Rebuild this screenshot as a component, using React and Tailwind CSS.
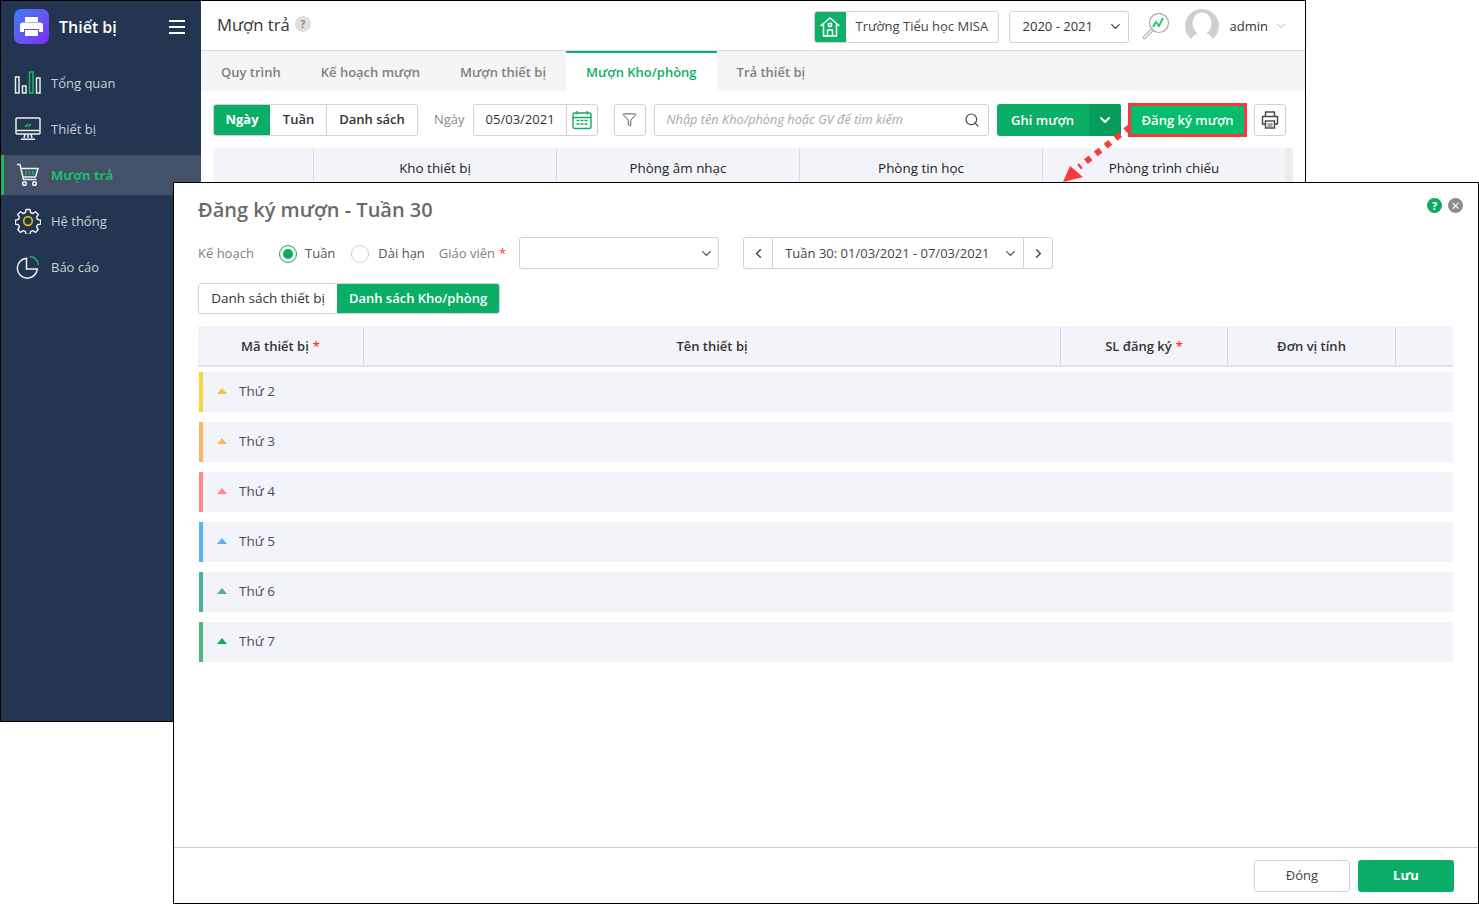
import { ChevronDown, ChevronLeft, ChevronRight, Search, Filter } from "lucide-react";

const menu = [
  { label: "Tổng quan", icon: <ChartIcon /> },
  { label: "Thiết bị", icon: <MonitorIcon /> },
  { label: "Mượn trả", icon: <CartIcon />, active: true },
  { label: "Hệ thống", icon: <GearIcon /> },
  { label: "Báo cáo", icon: <PieIcon /> },
];

const tabs = ["Quy trình", "Kế hoạch mượn", "Mượn thiết bị", "Mượn Kho/phòng", "Trả thiết bị"];

const days = [
  { label: "Thứ 2", bar: "bg-[#f6d440]", arrow: "border-b-[#fbbc3c]" },
  { label: "Thứ 3", bar: "bg-[#fdb665]", arrow: "border-b-[#fdb665]" },
  { label: "Thứ 4", bar: "bg-[#ff8a85]", arrow: "border-b-[#ff8a85]" },
  { label: "Thứ 5", bar: "bg-[#55b4f8]", arrow: "border-b-[#55b4f8]" },
  { label: "Thứ 6", bar: "bg-[#45b39d]", arrow: "border-b-[#45b39d]" },
  { label: "Thứ 7", bar: "bg-[#4cbb7a]", arrow: "border-b-[#0fa85c]" },
];

function ChartIcon() {
  return (
    <svg width="28" height="24" viewBox="0 0 28 24" fill="none" strokeWidth="1.5">
      <rect x="1.5" y="6" width="3.5" height="16" stroke="#e8ebef" />
      <rect x="8.5" y="15" width="3.5" height="7" stroke="#e8ebef" />
      <rect x="15.5" y="1" width="3.5" height="21" stroke="#19b868" />
      <rect x="22.5" y="7" width="3.5" height="15" stroke="#e8ebef" />
    </svg>
  );
}

function MonitorIcon() {
  return (
    <svg width="26" height="24" viewBox="0 0 26 24" fill="none" stroke="#eef0f3" strokeWidth="1.5">
      <rect x="1" y="1" width="24" height="16" rx="1" />
      <path d="M1 13.5h24M13 17v4M9 21l1-4M17 21l-1-4M6 22.3h14" />
      <path d="M10 10l3-3M13 10l3-3" stroke="#19b868" />
    </svg>
  );
}

function CartIcon() {
  return (
    <svg width="24" height="24" viewBox="0 0 24 24" fill="none" stroke="#eef0f3" strokeWidth="1.5">
      <path d="M1 1.5h3l3.5 15h13M5 5.500h17l-2.500 8.500H7" />
      <path d="M10 8v4M13.500 8v4M17 8v4" stroke="#19b868" />
      <circle cx="8.500" cy="20.500" r="1.800" />
      <circle cx="18.500" cy="20.500" r="1.800" />
    </svg>
  );
}

function GearIcon() {
  return (
    <svg width="26" height="26" viewBox="0 0 26 26" fill="none" stroke="#eef0f3" strokeWidth="1.4">
      <path d="M11 1.500h4l.6 3 2.300 1 2.600-1.700 2.800 2.800-1.700 2.600 1 2.300 3 .6v4l-3 .6-1 2.300 1.700 2.600-2.800 2.800-2.600-1.700-2.300 1-.6 2.700h-4l-.6-2.700-2.300-1-2.600 1.700-2.800-2.800 1.700-2.600-1-2.300-3-.6v-4l3-.6 1-2.300-1.700-2.600 2.800-2.800 2.600 1.700 2.300-1z" strokeLinejoin="round" />
      <circle cx="13" cy="13" r="4.300" stroke="#e5b318" strokeWidth="1.700" />
    </svg>
  );
}

function PieIcon() {
  return (
    <svg width="24" height="24" viewBox="0 0 24 24" fill="none" stroke="#eef0f3" strokeWidth="1.5">
      <path d="M10.500 3.200a10 10 0 1 0 10.800 10.800H10.500z" />
      <path d="M14 1.500a9 9 0 0 1 8.500 8.500" stroke="#19b868" />
    </svg>
  );
}

function HouseIcon() {
  return (
    <svg width="22" height="22" viewBox="0 0 22 22" fill="none" stroke="#fff" strokeWidth="1.5" strokeLinejoin="round">
      <path d="M1.500 10L11 2l9.500 8M4.500 8v12h13V8" />
      <path d="M8.500 20v-6h5v6" />
      <rect x="9.500" y="7.500" width="3" height="3" />
    </svg>
  );
}

function LensIcon() {
  return (
    <svg width="28" height="28" viewBox="0 0 28 28" fill="none">
      <circle cx="17" cy="10" r="9.500" stroke="#a9a9a9" strokeWidth="1.200" fill="#fff" />
      <path d="M10 17L2.500 24.500" stroke="#a9a9a9" strokeWidth="3.400" strokeLinecap="round" />
      <path d="M10 17L2.500 24.500" stroke="#fff" strokeWidth="1.400" strokeLinecap="round" />
      <path d="M11 14l3-5 3 4 4-8" stroke="#1fc46f" strokeWidth="1.800" />
    </svg>
  );
}

function AvatarIcon() {
  return (
    <svg width="34" height="34" viewBox="0 0 34 34">
      <circle cx="17" cy="17" r="17" fill="#cfcfcf" />
      <ellipse cx="17" cy="14.500" rx="9.500" ry="11" fill="#fff" />
      <path d="M5 34c1-7 6-10 12-10s11 3 12 10z" fill="#fff" />
    </svg>
  );
}

function CalendarIcon() {
  return (
    <svg width="20" height="20" viewBox="0 0 20 20" fill="none" stroke="#10ab62" strokeWidth="1.400">
      <rect x="1" y="3" width="18" height="15.500" rx="2" />
      <path d="M1 7.500h18M5 1v3.500M15 1v3.500" />
      <path d="M4.500 10.500h3M8.500 10.500h3M12.500 10.500h3M4.500 14h3M8.500 14h3M12.500 14h3" strokeWidth="1.600" />
    </svg>
  );
}

function PrintIcon() {
  return (
    <svg width="18" height="18" viewBox="0 0 18 18" fill="none" stroke="#444" strokeWidth="1.400">
      <path d="M4.500 5V1h9v4M4.500 13H1.500V5.500h15V13h-3" strokeLinejoin="round" />
      <rect x="4.500" y="10" width="9" height="7" />
      <path d="M6.500 13h5M6.500 15h5" strokeWidth="1" />
    </svg>
  );
}

function Sidebar() {
  return (
    <aside className="w-[200px] shrink-0 bg-[#233550]">
      <div className="h-[51px] flex items-center pl-[13px] pr-4">
        <div className="w-[35px] h-[35px] rounded-[7px] bg-gradient-to-br from-[#2f7bf5] to-[#7a26ec] flex items-center justify-center">
          <svg width="23" height="20" viewBox="0 0 23 20" fill="#fff">
            <path d="M5 0h13v5H5z" />
            <path d="M3 5.500h17a3 3 0 0 1 3 3V15h-4v-3H4v3H0V8.500a3 3 0 0 1 3-3z" />
            <path d="M5 13h13v6H5z" />
          </svg>
        </div>
        <span className="ml-[10px] text-base font-semibold text-white">Thiết bị</span>
        <div className="ml-auto w-4 flex flex-col gap-[4px]">
          <div className="h-0.5 bg-white" />
          <div className="h-0.5 bg-white" />
          <div className="h-0.5 bg-white" />
        </div>
      </div>
      <nav className="flex flex-col gap-[6px] pt-[11px]">
        {menu.map((item) => (
          <div
            key={item.label}
            className={
              item.active
                ? "h-10 flex items-center border-l-[3px] border-[#19b868] bg-[#435269] text-[#1fba6c] font-bold"
                : "h-10 flex items-center border-l-[3px] border-transparent text-[#c8cfd9]"
            }
          >
            <div className="w-[47px] flex justify-center pl-[1px]">{item.icon}</div>
            <span className="text-[13px] pt-[2px]">{item.label}</span>
          </div>
        ))}
      </nav>
    </aside>
  );
}

function BackWindow() {
  return (
    <div className="w-[1306px] h-[722px] border border-black flex overflow-hidden bg-white">
      <Sidebar />
      <main className="flex-1 min-w-0">
        <header className="h-[50px] flex items-center pl-4 pr-[17px] border-b border-[#dcdcdc]">
          <h1 className="text-[16.7px] text-[#333] mb-[1px]">Mượn trả</h1>
          <div className="ml-[5px] mb-[3px] w-4 h-4 rounded-full bg-[#dedede] text-[#888] text-[10px] font-bold flex items-center justify-center">?</div>
          <div className="ml-auto mt-[2px] w-[185px] h-8 rounded-[3px] border border-[#d2d2d2] flex items-center overflow-hidden">
            <div className="w-[31px] h-full bg-[#0eaf66] flex items-center justify-center">
              <HouseIcon />
            </div>
            <span className="ml-[10px] text-[13px] text-[#444]">Trường Tiểu học MISA</span>
          </div>
          <div className="ml-[10px] mt-[2px] w-[120px] h-8 rounded-[3px] border border-[#d2d2d2] flex items-center justify-between pl-[13px] pr-[5px] text-[13px] text-[#333]">
            2020 - 2021
            <ChevronDown size={15} strokeWidth={2.2} className="text-[#444]" />
          </div>
          <div className="ml-[13px] mt-[2px]"><LensIcon /></div>
          <div className="ml-[15px] mt-[1px]"><AvatarIcon /></div>
          <span className="ml-[11px] mt-[2px] text-[13px] text-[#333]">admin</span>
          <ChevronDown size={14} strokeWidth={1.5} className="ml-[6px] text-[#a5a5a5]" />
        </header>

        <div className="h-10 bg-[#f5f5f5] flex">
          {tabs.map((tab) =>
            tab === "Mượn Kho/phòng" ? (
              <div key={tab} className="px-5 pt-[1px] bg-white border-t-2 border-[#0eaf66] flex items-center text-[13px] font-semibold text-[#0eaf66]">
                {tab}
              </div>
            ) : (
              <div key={tab} className="px-5 pt-[3px] flex items-center text-[13px] font-semibold text-[#808080]">
                {tab}
              </div>
            )
          )}
        </div>

        <div className="h-[57px] flex items-center pl-3">
          <div className="w-[205px] h-8 flex rounded-[3px] border border-[#d2d2d2] overflow-hidden text-[13px]">
            <div className="w-[56px] pt-[1px] bg-[#0aae66] text-white font-bold flex items-center justify-center">Ngày</div>
            <div className="w-[57px] pt-[1px] pl-[1px] text-[#333] font-semibold flex items-center justify-center border-r border-[#d2d2d2]">Tuần</div>
            <div className="flex-1 pt-[1px] text-[#333] font-semibold flex items-center justify-center">Danh sách</div>
          </div>
          <span className="ml-4 text-[13px] text-[#8a8a8a]">Ngày</span>
          <div className="ml-2 w-[125px] h-8 flex items-center rounded-[3px] border border-[#d2d2d2] text-[13px] text-[#333]">
            <span className="w-[92px] pl-3">05/03/2021</span>
            <div className="flex-1 h-full border-l border-[#d2d2d2] flex items-center justify-center">
              <CalendarIcon />
            </div>
          </div>
          <div className="ml-4 w-8 h-8 rounded-[3px] border border-[#d2d2d2] flex items-center justify-center">
            <Filter size={15} strokeWidth={1.4} className="text-[#444]" />
          </div>
          <div className="ml-2 w-[335px] h-8 rounded-[3px] border border-[#d2d2d2] flex items-center pl-3 pr-[8px]">
            <span className="text-[12.75px] italic text-[#a8a8a8]">Nhập tên Kho/phòng hoặc GV để tìm kiếm</span>
            <Search size={16} strokeWidth={1.8} className="ml-auto text-[#444]" />
          </div>
          <div className="ml-2 w-[124px] h-8 rounded-[3px] bg-[#0aae66] flex text-white text-[13px] font-semibold overflow-hidden">
            <div className="w-[92px] pt-[2px] flex items-center justify-center">Ghi mượn</div>
            <div className="flex-1 pl-[1px] bg-[#089c5b] flex items-center justify-center">
              <ChevronDown size={16} strokeWidth={3} />
            </div>
          </div>
          <div className="ml-[7px] mt-[1px] w-[119px] h-[34px] pl-[1px] pt-[1px] border-[3px] border-[#f8393f] bg-[#06bd6d] flex items-center justify-center text-white text-[13px] font-semibold">
            Đăng ký mượn
          </div>
          <div className="ml-[7px] w-8 h-8 rounded-[3px] border border-[#d2d2d2] flex items-center justify-center">
            <PrintIcon />
          </div>
        </div>

        <div className="ml-3 w-[1080px] flex">
          <div className="w-[1072px] h-[34px] bg-[#f3f4f9] flex text-[13.4px] text-[#222]">
            <div className="w-[100px]" />
            {["Kho thiết bị", "Phòng âm nhạc", "Phòng tin học", "Phòng trình chiếu"].map((col) => (
              <div key={col} className="w-[243px] pt-[10px] border-l border-[#d5d8e6] text-center">
                {col}
              </div>
            ))}
          </div>
          <div className="flex-1 bg-[#ececec] rounded-t" />
        </div>
      </main>
    </div>
  );
}

function Modal() {
  return (
    <div className="absolute left-[173px] top-[182px] w-[1306px] h-[722px] border border-black bg-white flex flex-col">
      <div className="flex-1 pl-6 pr-[25px] pt-[10px]">
        <div className="h-[34px] flex items-start">
          <h2 className="text-xl leading-[33px] font-semibold text-[#6a6a6a]">Đăng ký mượn - Tuần 30</h2>
          <div className="ml-auto -mr-[10px] mt-[5px] flex gap-[6px]">
            <div className="w-[15px] h-[15px] rounded-full bg-[#0eaa5e] text-white text-[11px] leading-none font-bold flex items-center justify-center">?</div>
            <div className="w-[15px] h-[15px] rounded-full bg-[#8c8c8c] text-white text-[15px] leading-none flex items-center justify-center">×</div>
          </div>
        </div>

        <div className="mt-[10px] h-8 flex items-center text-[13px]">
          <span className="w-[81px] pt-[2px] text-[#808080]">Kế hoạch</span>
          <div className="mt-[2px] w-[18px] h-[18px] rounded-full border border-[#0eaa5e] flex items-center justify-center">
            <div className="w-[10px] h-[10px] rounded-full bg-[#0eaa5e]" />
          </div>
          <span className="ml-2 pt-[2px] text-[#555]">Tuần</span>
          <div className="ml-[16px] mt-[2px] w-[18px] h-[18px] rounded-full border border-[#cfcfcf]" />
          <span className="ml-[9px] pt-[2px] text-[#555]">Dài hạn</span>
          <span className="ml-[14px] pt-[2px] text-[#808080]">Giáo viên</span>
          <span className="ml-1 pt-[2px] text-[#f33]">*</span>
          <div className="ml-[13px] w-[200px] h-8 rounded-[3px] border border-[#d2d2d2] flex items-center justify-end pr-[4px]">
            <ChevronDown size={15} strokeWidth={2.2} className="text-[#555]" />
          </div>
          <div className="ml-6 w-[310px] h-8 rounded-[3px] border border-[#d2d2d2] flex items-center text-[#444]">
            <div className="w-[29px] h-full flex items-center justify-center border-r border-[#d2d2d2]">
              <ChevronLeft size={15} strokeWidth={2.2} />
            </div>
            <span className="pl-3 pt-[2px]">Tuần 30: 01/03/2021 - 07/03/2021</span>
            <ChevronDown size={15} strokeWidth={2.2} className="ml-auto mr-[5px] text-[#555]" />
            <div className="w-[29px] h-full pl-[1px] flex items-center justify-center border-l border-[#d2d2d2]">
              <ChevronRight size={15} strokeWidth={2.2} />
            </div>
          </div>
        </div>

        <div className="mt-[14px] w-[302px] h-[31px] flex rounded-[3px] border border-[#d2d2d2] overflow-hidden">
          <div className="w-[138px] flex items-center justify-center text-[13.5px] text-[#333]">Danh sách thiết bị</div>
          <div className="flex-1 bg-[#0aae66] flex items-center justify-center text-[13px] text-white font-semibold">Danh sách Kho/phòng</div>
        </div>

        <div className="mt-[12px] h-[41px] pt-[2px] bg-[#f3f4f9] border-b-2 border-[#e0e1ea] flex text-[13px] text-[#333] font-semibold">
          <div className="w-[165px] flex items-center justify-center">
            Mã thiết bị <span className="ml-1 text-[#f33]">*</span>
          </div>
          <div className="w-[697px] flex items-center justify-center border-l border-[#d5d8e6]">Tên thiết bị</div>
          <div className="w-[167px] flex items-center justify-center border-l border-[#d5d8e6]">
            SL đăng ký <span className="ml-1 text-[#f33]">*</span>
          </div>
          <div className="w-[168px] flex items-center justify-center border-l border-[#d5d8e6]">Đơn vị tính</div>
          <div className="flex-1 border-l border-[#d5d8e6]" />
        </div>

        <div className="mt-[5px] ml-px flex flex-col gap-[10px]">
          {days.map((day) => (
            <div key={day.label} className="h-10 bg-[#f3f4f9] flex items-center">
              <div className={`w-1 h-full ${day.bar}`} />
              <div className={`ml-[14px] mb-[2px] w-0 h-0 border-x-[5px] border-x-transparent border-b-[6px] ${day.arrow}`} />
              <span className="ml-[12px] mb-[2px] text-[13.5px] text-[#4a4a62]">{day.label}</span>
            </div>
          ))}
        </div>
      </div>

      <footer className="h-[56px] border-t border-[#cfcfcf] flex justify-end items-start gap-2 pt-3 pr-6 text-[13px]">
        <div className="w-24 h-8 rounded-[3px] border border-[#d2d2d2] flex items-center justify-center text-[#444]">Đóng</div>
        <div className="w-24 h-8 rounded-[3px] bg-[#0aae66] flex items-center justify-center text-white font-bold">Lưu</div>
      </footer>
    </div>
  );
}

export default function App() {
  return (
    <div className="relative w-full h-[904px] overflow-hidden bg-white font-['Open_Sans',sans-serif]">
      <BackWindow />
      {/* mui ten chi tu nut Dang ky muon xuong modal */}
      <svg className="absolute left-[1055px] top-[120px]" width="85" height="65" viewBox="0 0 85 65" fill="none">
        <path d="M75 7L24 47" stroke="#f8393f" strokeWidth="6" strokeDasharray="6 6.5" />
        <path d="M8 62L15 46L28 57z" fill="#f8393f" />
      </svg>
      <Modal />
    </div>
  );
}
